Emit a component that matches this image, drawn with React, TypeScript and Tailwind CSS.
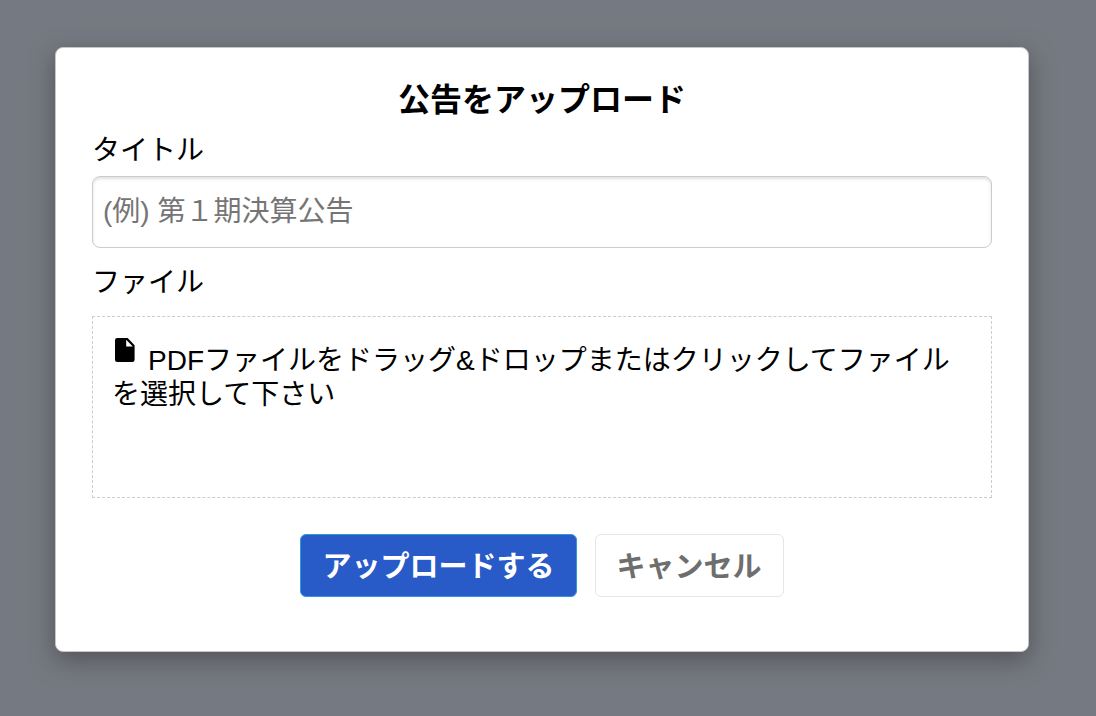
import { useState } from "react";

function FileIcon() {
  return (
    <svg
      viewBox="0 0 20 24"
      className="mr-[13px] mb-2 inline-block h-6 w-5 align-baseline"
      fill="currentColor"
      aria-hidden="true"
    >
      <path
        fillRule="evenodd"
        d="M2.2 0H12.6L19.6 7.2V21.8Q19.6 24 17.4 24H2.2Q0 24 0 21.8V2.2Q0 0 2.2 0ZM11.2 1.8V8.4H17.8Z"
      />
    </svg>
  );
}

export default function App() {
  const [title, setTitle] = useState("");

  return (
    <div className="min-h-screen bg-[#757981] pt-[47px] pr-[67px] pb-16 pl-[55px] font-['Liberation_Sans','Noto_Sans_CJK_JP',sans-serif] text-[28px] text-black">
      <form
        role="dialog"
        aria-labelledby="dialog-title"
        onSubmit={(e) => e.preventDefault()}
        className="rounded-lg border border-[#c4c6c8] bg-white px-9 pt-8 pb-[54px] shadow-[0_8px_24px_rgba(72,72,72,0.75)]"
      >
        <h1 id="dialog-title" className="text-center text-[32px] leading-10 font-bold">
          公告をアップロード
        </h1>
        <label htmlFor="title" className="mt-[11px] block leading-10">
          タイトル
        </label>
        <input
          id="title"
          type="text"
          value={title}
          onChange={(e) => setTitle(e.target.value)}
          placeholder="(例) 第１期決算公告"
          className="mt-[5px] block h-[72px] w-full rounded-lg border border-[#cccccc] px-2.5 shadow-[inset_0_2px_3px_rgba(0,0,0,0.12)] placeholder:text-[#757575]"
        />
        <label htmlFor="file" className="mt-[15px] block leading-10">
          ファイル
        </label>
        <label
          htmlFor="file"
          className="mt-[13px] block min-h-[182px] cursor-pointer border border-dashed border-[#cccccc] px-[19px] pt-[21px] leading-[34px]"
        >
          <span className="ml-[3px]">
            <FileIcon />
            PDFファイルをドラッグ&ドロップまたはクリックしてファイルを選択して下さい
          </span>
          <input id="file" type="file" accept="application/pdf" className="sr-only" />
        </label>
        <div className="mt-9 flex justify-center gap-[18px] text-[29px] leading-10 font-bold">
          <button
            type="submit"
            className="rounded-md border border-[#3298dc] bg-[#285ac8] px-[21px] pt-3 pb-[9px] text-white"
          >
            アップロードする
          </button>
          <button
            type="button"
            className="rounded-md border border-[#e6e6e6] bg-white px-[21px] pt-3 pb-[9px] text-[#6e6e6e]"
          >
            キャンセル
          </button>
        </div>
      </form>
    </div>
  );
}
